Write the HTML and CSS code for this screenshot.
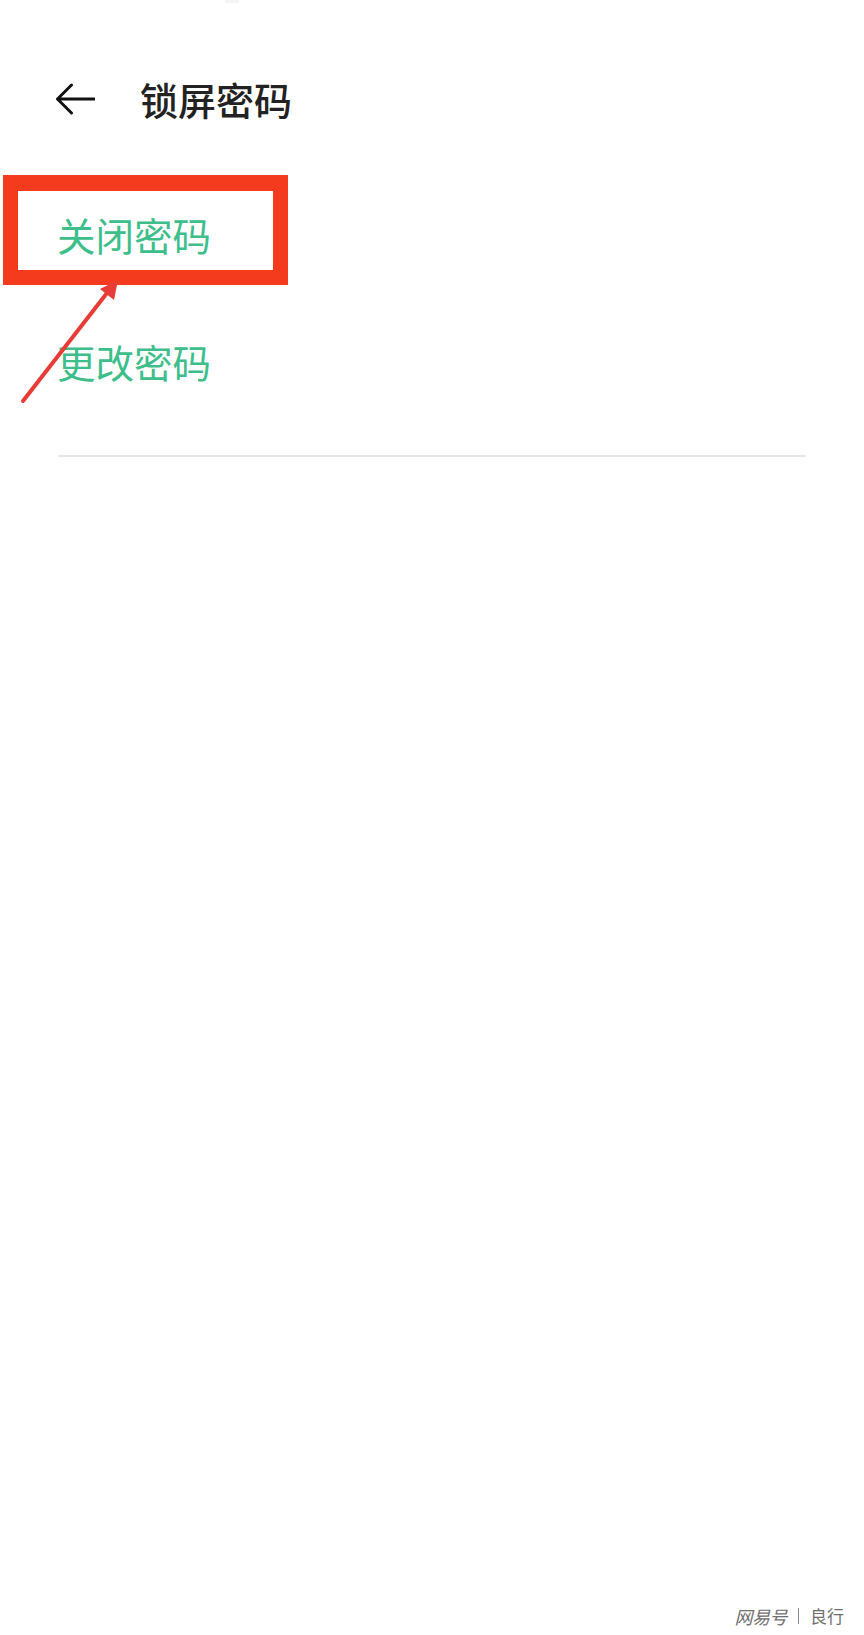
FILE: index.html
```html
<!DOCTYPE html>
<html lang="zh-CN">
<head>
<meta charset="utf-8">
<title>锁屏密码</title>
<link rel="stylesheet" href="styles.css">
</head>
<body>
<div class="page">
  <div class="top-mark"></div>
  <header class="header">
    <svg class="back" width="40" height="32" viewBox="0 0 40 32" aria-hidden="true">
      <path d="M2.5 16 H39 M16.5 2 L2.5 16 L16.5 30" fill="none" stroke="#111" stroke-width="3" stroke-linecap="round" stroke-linejoin="round"/>
    </svg>
    <h1 class="title">锁屏密码</h1>
  </header>
  <ul class="list">
    <li class="item">关闭密码</li>
    <li class="item">更改密码</li>
  </ul>
  <div class="divider"></div>

  <div class="highlight"></div>
  <svg class="pointer" width="160" height="420" viewBox="0 0 160 420" aria-hidden="true">
    <line x1="23" y1="401" x2="107" y2="293" stroke="#e83d37" stroke-width="4" stroke-linecap="round"/>
    <polygon points="118,280 100,289 114,300" fill="#e83d37"/>
  </svg>
  <div class="watermark"><span class="wm-logo">网易号</span><span class="wm-sep"></span><span class="wm-name">良行</span></div>
</div>
</body>
</html>
```

FILE: styles.css
```css
html, body {
  margin: 0;
  padding: 0;
  background: #ffffff;
}

.page {
  position: relative;
  width: 864px;
  height: 1635px;
  overflow: hidden;
  font-family: "Noto Sans CJK SC", "Noto Sans", sans-serif;
}

.top-mark {
  width: 14px;
  height: 3px;
  margin-left: 225px;
  background: #f4f4f4;
}

.header {
  display: flex;
  align-items: center;
  gap: 45px;
  margin-top: 77px;
  padding-left: 55px;
  height: 38px;
}

.back {
  display: block;
  flex: none;
}

.title {
  margin: 0;
  font-size: 38px;
  line-height: 38px;
  font-weight: 500;
  color: #222222;
}

.list {
  list-style: none;
  margin: 97px 0 0 0;
  padding: 0 0 0 57px;
  display: flex;
  flex-direction: column;
  gap: 89px;
}

.item {
  font-size: 38.5px;
  line-height: 38px;
  color: #3dbe8b;
  font-weight: 400;
}

.divider {
  margin: 75px 58px 0 58px;
  height: 2px;
  background: #e6e6e6;
}

.highlight {
  position: absolute;
  left: 3px;
  top: 175px;
  width: 285px;
  height: 110px;
  box-sizing: border-box;
  border: 15px solid #f43b1d;
  border-top-width: 16px;
}

.pointer {
  position: absolute;
  left: 0;
  top: 0;
}

.watermark {
  position: absolute;
  right: 20px;
  bottom: 10px;
  display: flex;
  align-items: center;
  gap: 8px;
  color: #6f6f6f;
}

.wm-logo {
  font-size: 18px;
  line-height: 18px;
  font-style: italic;
  letter-spacing: -0.5px;
}

.wm-sep {
  width: 1px;
  height: 16px;
  background: #8a8a8a;
  margin: 0 3px;
}

.wm-name {
  font-size: 17px;
  line-height: 18px;
}
```
